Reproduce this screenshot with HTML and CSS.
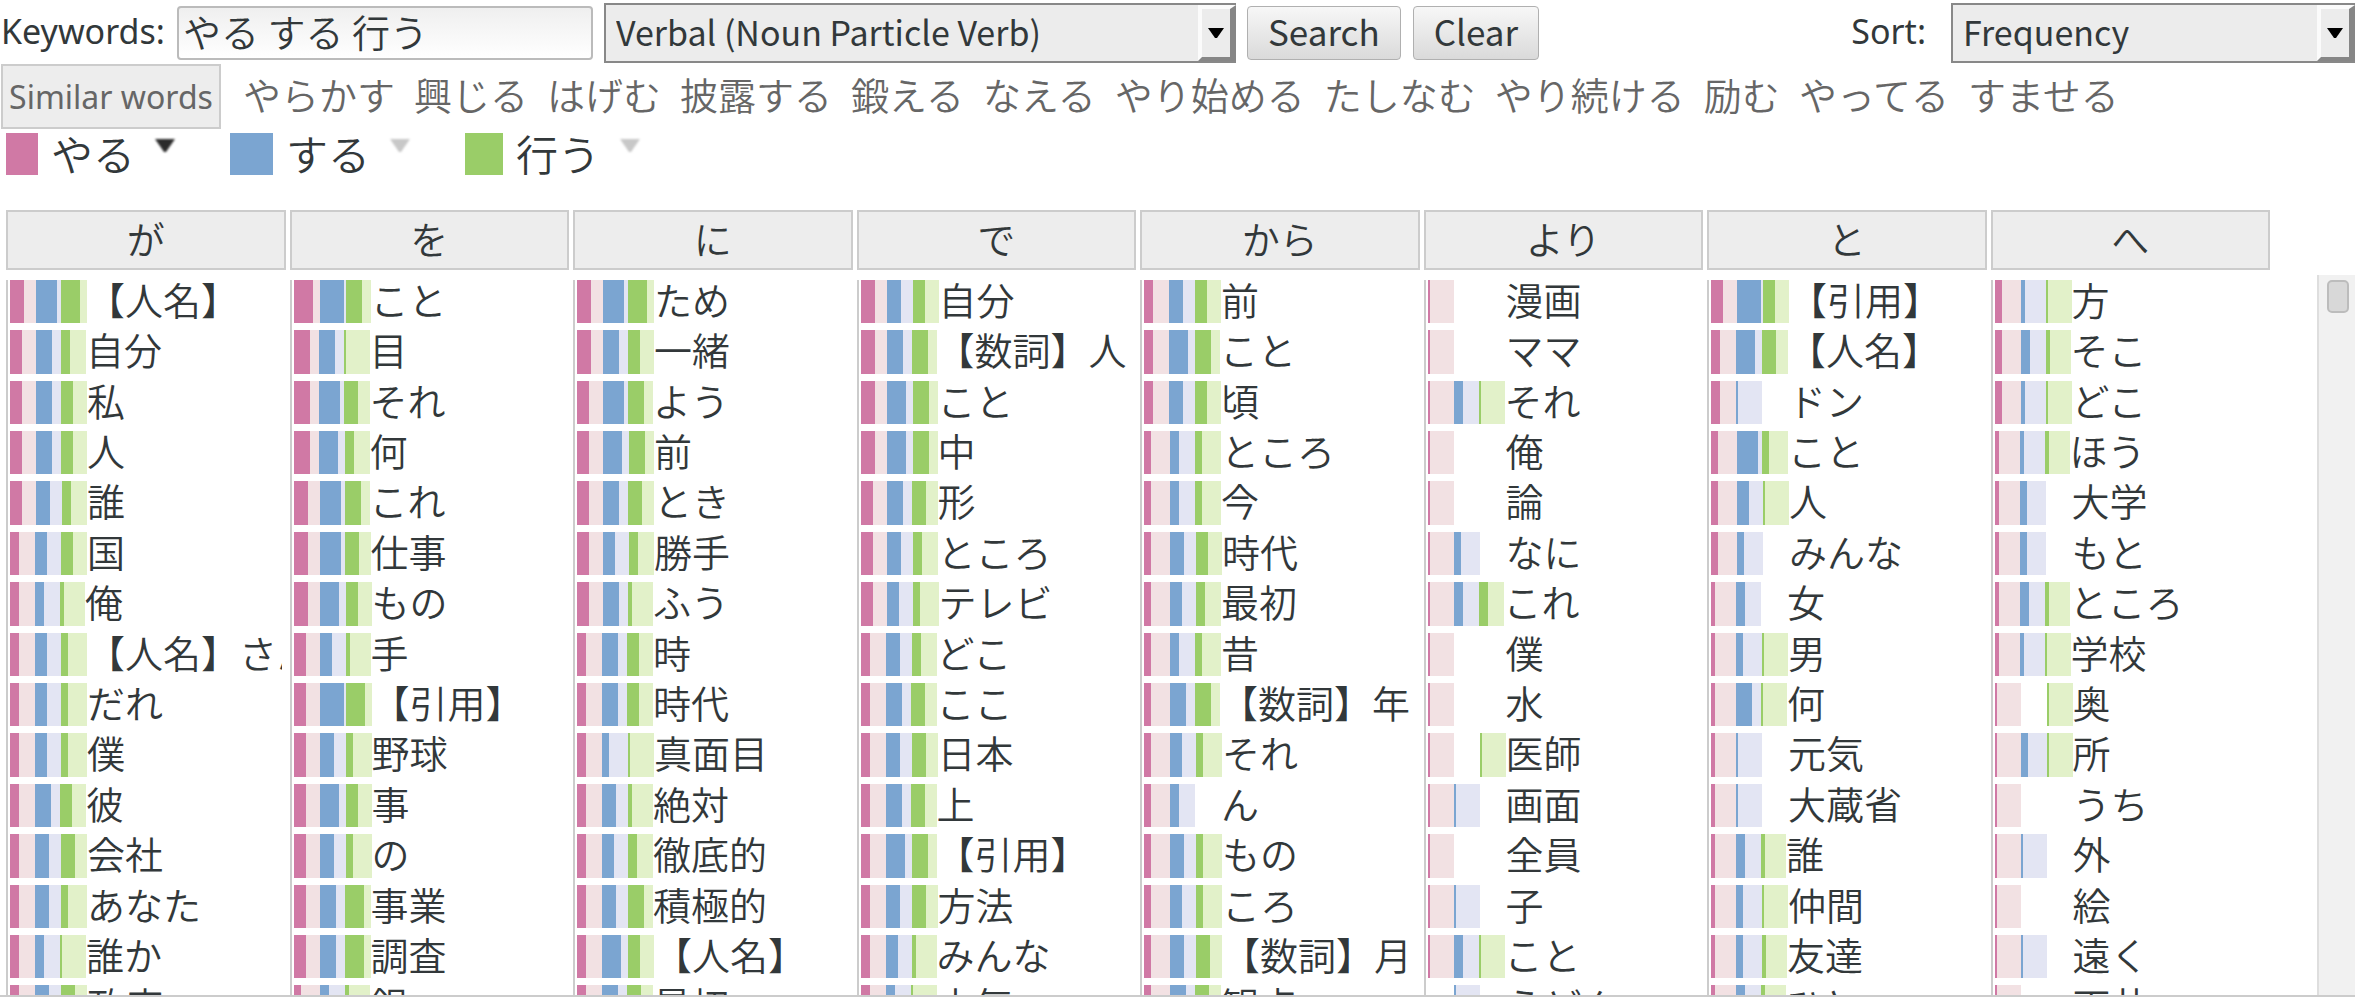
FILE: index.html
```
<!DOCTYPE html>
<html lang="ja">
<head>
<meta charset="utf-8">
<title>Collocation search</title>
<link rel="stylesheet" href="styles.css">
</head>
<body>
<form class="toolbar" onsubmit="return false">
  <label class="toolbar-label" for="keywords">Keywords:</label>
  <input class="keywords" id="keywords" type="text" value="やる する 行う">
  <span class="picker picker-pattern">
    <select class="picker-select" aria-label="Pattern"><option>Verbal (Noun Particle Verb)</option></select>
    <span class="picker-arrow"><svg width="16" height="10" viewBox="0 0 16 10"><path d="M0 0H16L9 10H7Z"/></svg></span>
  </span>
  <button class="push" type="submit">Search</button>
  <button class="push" type="button">Clear</button>
  <label class="toolbar-label sort-label" for="sort">Sort:</label>
  <span class="picker picker-sort">
    <select class="picker-select" id="sort"><option>Frequency</option></select>
    <span class="picker-arrow"><svg width="16" height="10" viewBox="0 0 16 10"><path d="M0 0H16L9 10H7Z"/></svg></span>
  </span>
</form>

<nav class="similar">
  <button class="similar-button" type="button">Similar words</button>
  <a href="#">やらかす</a><a href="#">興じる</a><a href="#">はげむ</a><a href="#">披露する</a><a href="#">鍛える</a><a href="#">なえる</a><a href="#">やり始める</a><a href="#">たしなむ</a><a href="#">やり続ける</a><a href="#">励む</a><a href="#">やってる</a><a href="#">すませる</a>
</nav>

<div class="legend">
  <button class="legend-item" type="button"><span class="swatch swatch-a"></span><span class="legend-word">やる</span><svg class="caret caret-on" width="22" height="15" viewBox="0 0 22 15"><path d="M1 1H21L12 14H10Z"/></svg></button>
  <button class="legend-item" type="button"><span class="swatch swatch-b"></span><span class="legend-word">する</span><svg class="caret" width="22" height="15" viewBox="0 0 22 15"><path d="M1 1H21L12 14H10Z"/></svg></button>
  <button class="legend-item" type="button"><span class="swatch swatch-c"></span><span class="legend-word">行う</span><svg class="caret" width="22" height="15" viewBox="0 0 22 15"><path d="M1 1H21L12 14H10Z"/></svg></button>
</div>

<div class="columns heads" id="heads"></div>
<main class="results">
  <div class="columns lists" id="lists"></div>
  <div class="scrollbar"><div class="scroll-thumb"></div></div>
</main>
<script src="app.js"></script>
</body>
</html>
```
FILE: app.js
```
// Each entry is a noun followed by one frequency level (0-10, "a" is 10) per keyword.
const columns = {
  'が': '【人名】 698,自分 574,私 575,人 575,誰 564,国 455,俺 442,【人名】さん 453,だれ 453,僕 453,彼 475,会社 466,あなた 463,誰か 441,政府 466',
  'を': 'こと 8a7,目 771,それ 796,何 784,これ 697,仕事 696,もの 685,手 552,【引用】 5a8,野球 563,事 585,の 563,事業 578,調査 578,銀 342',
  'に': 'ため 698,一緒 675,よう 597,前 587,とき 576,勝手 554,ふう 572,時 475,時代 475,真面目 431,絶対 462,徹底的 454,積極的 467,【人名】 485,最初 476',
  'で': '自分 665,【数詞】人 677,こと 687,中 687,形 576,ところ 564,テレビ 553,どこ 464,ここ 476,日本 466,上 476,【引用】 487,方法 466,みんな 452,本気 441',
  'から': '前 465,こと 487,頃 465,ところ 343,今 343,時代 365,最初 354,昔 343,【数詞】年 377,それ 353,ん 340,もの 363,ころ 353,【数詞】月 366,観点 376',
  'より': '漫画 100,ママ 100,それ 141,俺 100,論 100,なに 130,これ 144,僕 100,水 100,医師 101,画面 110,全員 100,子 110,こと 141,うどん 010',
  'と': '【引用】 5a5,【人名】 486,ドン 410,こと 393,人 351,みんな 330,女 240,男 231,何 271,元気 210,大蔵省 210,誰 242,仲間 231,友達 232,ひと 242',
  'へ': '方 321,そこ 342,どこ 321,ほう 222,大学 230,もと 230,ところ 242,学校 221,奥 101,所 131,うち 100,外 110,絵 100,遠く 110,天井 100'
};
const widths = [0, 2, 4, 7, 9, 12, 14, 16, 19, 21, 24];
const keys = ['a', 'b', 'c'];

function meter(level, key) {
  if (level === 0) return '<span class="blank"></span>';
  return `<span class="fill fill-${key}" style="width:${widths[level]}px"></span>` +
    `<span class="rest rest-${key}" style="width:${widths[11 - level]}px"></span>`;
}

for (const [particle, entries] of Object.entries(columns)) {
  const head = document.createElement('button');
  head.className = 'head';
  head.type = 'button';
  head.textContent = particle;
  document.getElementById('heads').append(head);

  const list = document.createElement('ul');
  list.className = 'list';
  list.innerHTML = entries.split(',').map(entry => {
    const [word, levels] = entry.split(' ');
    const bars = [...levels].map((c, i) => meter(parseInt(c, 16), keys[i])).join('');
    return `<li class="row">${bars}<span class="word">${word}</span></li>`;
  }).join('');
  document.getElementById('lists').append(list);
}
```
FILE: styles.css
```
* { box-sizing: border-box; }

body {
  margin: 0;
  height: 100vh;
  display: flex;
  flex-direction: column;
  overflow: hidden;
  background: #fff;
  color: #32383a;
  font-family: "Noto Sans CJK JP", sans-serif;
  font-size: 38px;
  font-weight: 350;
}

button, input, select {
  margin: 0;
  color: inherit;
  font-family: inherit;
  font-size: inherit;
  font-weight: inherit;
}

.toolbar {
  display: flex;
  align-items: center;
  height: 64px;
  padding-top: 2px;
}
.toolbar-label {
  padding: 0 0 4px 1px;
  font-family: "Noto Sans", sans-serif;
  font-size: 34px;
  font-weight: 400;
  white-space: nowrap;
}
.toolbar-label:first-child { width: 177px; }
.keywords {
  width: 416px;
  height: 54px;
  margin-right: 11px;
  padding: 0 4px 6px;
  border: 2px solid #bbb;
  border-radius: 4px;
  background: linear-gradient(#efefef, #fff);
}

.picker { position: relative; flex: none; height: 60px; }
.picker-pattern { width: 632px; margin-right: 11px; }
.picker-sort { width: 404px; }
.picker-select {
  display: block;
  width: 100%;
  height: 100%;
  padding: 0 48px 4px 10px;
  border: 2px solid #888;
  border-radius: 0;
  background: #ececec;
  appearance: none;
  font-size: 34px;
  font-weight: 400;
}
.picker-arrow {
  position: absolute;
  top: 2px;
  right: 0;
  bottom: 2px;
  width: 38px;
  display: flex;
  align-items: center;
  justify-content: center;
  border: solid;
  border-width: 4px 6px 4px 4px;
  border-color: #fbfbfb #868686 #868686 #fbfbfb;
  pointer-events: none;
}

.push {
  height: 54px;
  margin-right: 12px;
  padding: 0 20px 5px;
  border: 1px solid #b0b0b0;
  border-radius: 4px;
  background: linear-gradient(#f7f7f7, #dadada);
  font-size: 35px;
  font-weight: 400;
  line-height: 46px;
}
.sort-label { margin: 0 25px 0 auto; }

.similar {
  display: flex;
  align-items: center;
  gap: 19px;
  height: 65px;
  padding-left: 1px;
  color: #666;
  white-space: nowrap;
}
.similar a { padding-bottom: 6px; color: inherit; text-decoration: none; }
.similar-button {
  width: 220px;
  height: 65px;
  margin-right: 3px;
  padding: 0;
  border: 2px solid #ccc;
  background: #ededed;
  font-family: "Noto Sans", sans-serif;
  font-size: 32px;
  font-weight: 400;
}

.legend {
  display: flex;
  gap: 54px;
  height: 81px;
  padding: 4px 6px 0;
}
.legend-item {
  display: flex;
  align-items: center;
  height: 42px;
  padding: 0;
  border: 0;
  background: none;
  font-size: 42px;
}
.legend-word { padding-bottom: 4px; }
.swatch { height: 42px; margin-right: 13px; }
.swatch-a { width: 32px; background: #d079a5; }
.swatch-b { width: 43px; background: #7ba5d1; }
.swatch-c { width: 38px; background: #9acd68; }
.caret {
  align-self: flex-start;
  margin: 5px 0 0 19px;
  fill: #c8c8c8;
  filter: blur(1px);
}
.caret-on { fill: #2b2b2b; }

.columns {
  display: grid;
  grid-template-columns: repeat(8, minmax(0, 1fr));
  gap: 4px;
}
.heads { height: 60px; margin: 0 85px 5px 6px; }
.head {
  height: 60px;
  padding: 0 0 4px;
  border: 2px solid #ccc;
  background: #ededed;
  line-height: 52px;
}

.results {
  flex: 1;
  min-height: 0;
  display: flex;
  margin-bottom: 2px;
  border-bottom: 2px solid #ccc;
}
.lists {
  flex: 1;
  min-width: 0;
  margin: 5px 49px 0 6px;
  overflow: hidden;
}
.list {
  margin: 0;
  padding: 0 0 0 2px;
  border-left: 2px solid #ccc;
  border-right: 4px solid transparent;
  list-style: none;
  overflow-x: clip;
}
.row {
  display: flex;
  height: 50px;
  padding-bottom: 7px;
  line-height: 37px;
  white-space: nowrap;
}
.row:nth-child(5n + 2), .row:nth-child(5n) { height: 51px; }
.word, .fill, .rest, .blank { flex: none; }
.blank { width: 26px; }
.fill-a { background: #d079a5; }
.fill-b { background: #7ba5d1; }
.fill-c { background: #9acd68; }
.rest-a { background: #f2e1e3; }
.rest-b { background: #e3e5f3; }
.rest-c { background: #e2f1c9; }

.scrollbar {
  width: 38px;
  padding: 5px 6px 0 8px;
  border-left: 2px solid #dedede;
  background: #f1f1f1;
}
.lists { margin-right: 47px; }
.scroll-thumb {
  height: 33px;
  border: 2px solid #bcbcbc;
  border-radius: 5px;
  background: #d8d8d8;
}
```
